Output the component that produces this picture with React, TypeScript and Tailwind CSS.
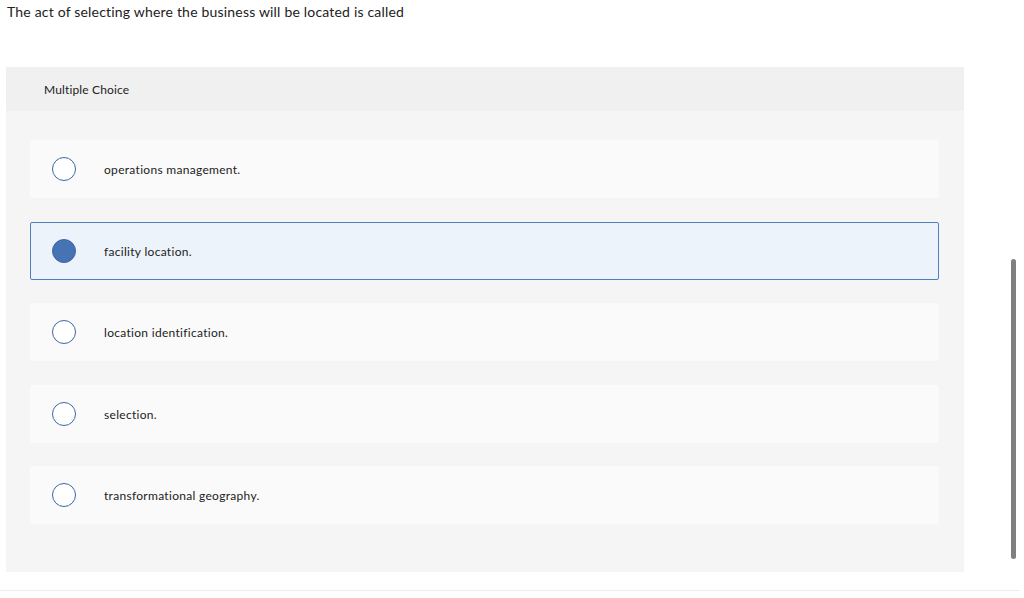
import React from "react"

const options = [
  "operations management.",
  "facility location.",
  "location identification.",
  "selection.",
  "transformational geography.",
]

export default function App() {
  const selected = 1
  return (
    <div className="relative h-[598px] w-[1024px] overflow-hidden bg-white font-['Lato','Open_Sans',sans-serif] text-[#222]">
      <div className="px-[7px] pt-[3px] text-[14px] leading-[18px] tracking-[0.19px]">
        The act of selecting where the business will be located is called
      </div>

      <div className="ml-[6px] mt-[46px] w-[958px] bg-[#f5f5f5] pb-[48px]">
        <div className="flex h-[44px] items-center bg-[#f0f0f0] pl-[38px] pt-[1px] text-[12px] tracking-[0.15px]">
          Multiple Choice
        </div>
        <div className="flex flex-col gap-[23.5px] pl-[24px] pr-[25px] pt-[29px]">
          {options.map((o, i) => {
            const on = i === selected
            return (
              <div
                key={o}
                className={`flex h-[58px] items-center rounded-[2px] border pl-[21px] ${
                  on ? "border-[#4f7fc3] bg-[#ecf3fb]" : "border-transparent bg-[#fafafa]"
                }`}
              >
                <span
                  className={`h-[24px] w-[24px] shrink-0 rounded-full border ${
                    on ? "border-[#3d67a6] bg-[#4673b3]" : "border-[#3d67a6] bg-white"
                  }`}
                />
                <span className="ml-[28px] pt-[2px] text-[12px] tracking-[0.3px] text-[#222]">{o}</span>
              </div>
            )
          })}
        </div>
      </div>

      {/* scrollbar */}
      <div className="absolute left-[1011px] top-[259px] h-[300px] w-[5px] rounded-full bg-[#808080]" />
      <div className="absolute left-0 top-[590px] h-px w-[1020px] bg-[#ececec]" />
    </div>
  )
}
